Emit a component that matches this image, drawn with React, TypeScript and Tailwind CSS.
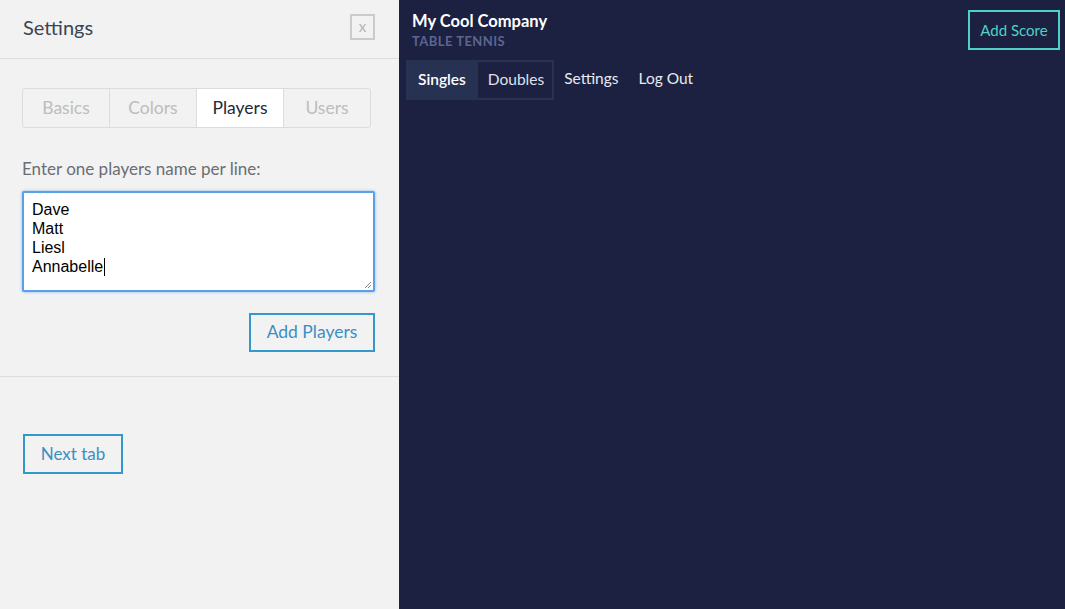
import React from "react";

export default function App() {
  const font = { fontFamily: "Lato, 'Noto Sans', sans-serif" };
  return (
    <div className="flex w-[1065px] h-[609px] overflow-hidden" style={font}>
      <div className="w-[399px] shrink-0 bg-[#f2f2f2] flex flex-col">
        <div className="h-[59px] border-b border-[#dcdcdc] flex items-center justify-between pl-[23px] pr-[24px]">
          <span className="text-[20px] text-[#3d4452] mt-[-4px]">Settings</span>
          <div className="w-[25px] h-[26px] border-2 border-[#cbcbcb] flex items-center justify-center text-[#b5b5b5] text-[15px] leading-none mt-[-4px] pb-[2px]">x</div>
        </div>
        <div className="px-[22px] pt-[29px] pb-[24px] border-b border-[#dcdcdc]">
          <div className="flex w-[349px] h-[40px] border border-[#dcdcdc] rounded-[3px] text-[17.5px]">
            <div className="flex-1 flex items-center justify-center text-[#bdbdbd] pt-[1px]">Basics</div>
            <div className="flex-1 flex items-center justify-center text-[#bdbdbd] border-l border-[#dcdcdc] pt-[1px]">Colors</div>
            <div className="flex-1 flex items-center justify-center text-[#222a38] bg-white border-l border-[#dcdcdc] pt-[1px]">Players</div>
            <div className="flex-1 flex items-center justify-center text-[#bdbdbd] border-l border-[#dcdcdc] pt-[1px]">Users</div>
          </div>
          <div className="mt-[31px] text-[17px] text-[#6b6e74] leading-[20px]">Enter one players name per line:</div>
          <div className="mt-[12px] w-[353px] h-[101px] bg-white border-2 border-[#5aa0e6] rounded-[2px] shadow-[0_0_3px_#7fb8f0] relative px-[8px] pt-[7px]" style={{ fontFamily: "'Liberation Sans', Arial, sans-serif" }}>
            <div className="text-[16px] leading-[19px] text-black">
              <div>Dave</div>
              <div>Matt</div>
              <div>Liesl</div>
              <div className="flex items-center">Annabelle<span className="inline-block w-[1px] h-[18px] bg-black ml-[1px]"></span></div>
            </div>
            <svg className="absolute right-[1px] bottom-[1px]" width="8" height="8" viewBox="0 0 8 8">
              <line x1="1" y1="7" x2="7" y2="1" stroke="#888" strokeWidth="1" />
              <line x1="4" y1="7" x2="7" y2="4" stroke="#888" strokeWidth="1" />
            </svg>
          </div>
          <div className="flex justify-end mt-[21px] pr-[2px]">
            <div className="w-[126px] h-[39px] border-2 border-[#3399cc] flex items-center justify-center text-[#3b8fc4] text-[17.5px]">Add Players</div>
          </div>
        </div>
        <div className="pl-[23px] pt-[57px]">
          <div className="w-[100px] h-[40px] border-2 border-[#3399cc] flex items-center justify-center text-[#3b8fc4] text-[17px]">Next tab</div>
        </div>
      </div>
      <div className="flex-1 bg-[#1c2141] relative">
        <div className="pl-[13px] pt-[10px]">
          <div className="text-white text-[16.5px] font-bold leading-[22px]">My Cool Company</div>
          <div className="text-[#5b6590] text-[13px] font-bold leading-[18px] tracking-[0.45px]">TABLE TENNIS</div>
        </div>
        <div className="flex items-center ml-[7px] mt-[10px] text-[15.5px]">
          <div className="flex h-[40px] border-2 border-[#273152]">
            <div className="bg-[#273152] text-white font-semibold flex items-center pl-[10px] pr-[12px]">Singles</div>
            <div className="text-[#dfe1ea] flex items-center pl-[10px] pr-[8px]">Doubles</div>
          </div>
          <div className="text-[#e8e9ef] ml-[10px] mt-[-2px]">Settings</div>
          <div className="text-[#e8e9ef] ml-[20px] mt-[-2px]">Log Out</div>
        </div>
        <div className="absolute right-[5px] top-[10px] w-[92px] h-[40px] border-2 border-[#4fd1c5] flex items-center justify-center text-[#4fd1c5] text-[15px]">Add Score</div>
      </div>
    </div>
  );
}
